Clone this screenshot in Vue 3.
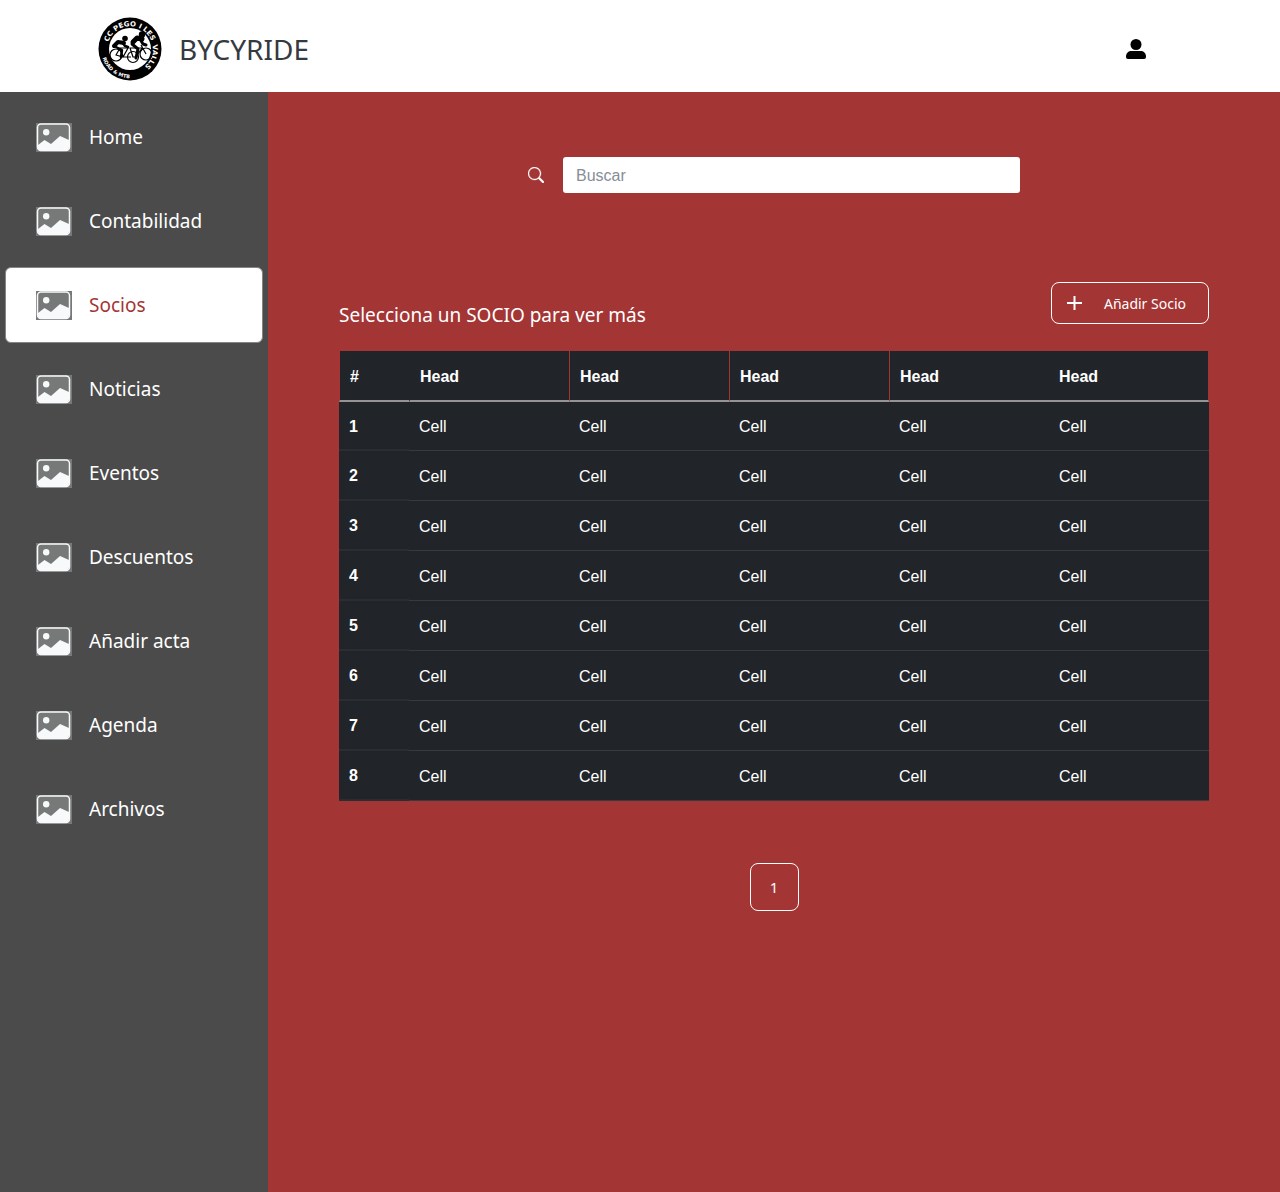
<script setup>
import { ref } from 'vue'

const sections = ['Home', 'Contabilidad', 'Socios', 'Noticias', 'Eventos', 'Descuentos', 'Añadir acta', 'Agenda', 'Archivos']
const active = ref('Socios')
const query = ref('')
const columns = 5
const rows = 8
</script>

<template>
  <div class="page">
    <header class="topbar">
      <a href="#" class="brand">
        <svg class="logo" viewBox="0 0 64 64" aria-hidden="true">
          <defs>
            <path id="arc-top" d="M10.300 25A22.800 22.800 0 1 1 46 50" />
            <path id="arc-bottom" d="M4.500 41A29 29 0 0 0 38 60.500" />
          </defs>
          <circle cx="32" cy="32" r="31.500" fill="#000" />
          <circle cx="32" cy="32" r="21" fill="#fff" />
          <text class="ring-text"><textPath href="#arc-top">CC PEGO I LES</textPath></text>
          <text class="ring-text"><textPath href="#arc-top" startOffset="60">VALLS</textPath></text>
          <text class="ring-small"><textPath href="#arc-bottom">ROAD &amp; MTB</textPath></text>
          <g fill="none" stroke="#000" stroke-width="1.200">
            <circle cx="18" cy="38" r="6" />
            <circle cx="35" cy="40" r="5.500" />
            <circle cx="48" cy="37" r="6" />
            <path d="M18 38l4-7h8l-5 9zM22 31l3 9h8M35 40l-3-9h12l-6 9zM43 28l5 9" />
          </g>
          <g fill="none" stroke="#000" stroke-linecap="round" stroke-linejoin="round">
            <path d="M16 29l4-4 6 1" stroke-width="4" />
            <path d="M24 25l3 4 3 1M18 30l6 3-1 7" stroke-width="2.500" />
            <path d="M35 25l4-4 5 1" stroke-width="5" />
            <path d="M42 22l3 5 3 1M34 27l6 5-2 9" stroke-width="3" />
          </g>
          <circle cx="27" cy="21.500" r="2.800" />
          <circle cx="44" cy="17.500" r="3.200" />
        </svg>
        <span class="brand-name">BYCYRIDE</span>
      </a>
      <button type="button" class="profile" aria-label="Perfil">
        <svg viewBox="0 0 20 20" width="20" height="20" aria-hidden="true">
          <circle cx="10" cy="5.500" r="5.500" />
          <path d="M0 17.500C0 14 2.500 12 5.500 12h9c3 0 5.500 2 5.500 5.500v.5q0 2-2 2H2q-2 0-2-2z" />
        </svg>
      </button>
    </header>

    <div class="body">
      <nav class="sidebar">
        <a
          v-for="name in sections"
          :key="name"
          href="#"
          class="item"
          :class="{ active: name === active }"
          @click.prevent="active = name"
        >
          <svg class="picture" viewBox="0 0 36 29" aria-hidden="true">
            <rect width="36" height="29" fill="#777878" />
            <rect x="1.500" y="1" width="32" height="26.500" rx="3.500" fill="none" stroke="#f8f9fa" stroke-width="1.500" />
            <circle cx="10.200" cy="9.300" r="3.200" fill="#f8f9fa" />
            <path d="M2 22l6.500-5 6.500 4L24 13l9 4v7q0 3.500-3 3.500H5q-3 0-3-3z" fill="#f8f9fa" />
          </svg>
          <span>{{ name }}</span>
        </a>
      </nav>

      <main class="content">
        <form class="search" role="search" @submit.prevent>
          <label for="search-box" aria-label="Buscar">
            <svg viewBox="0 0 16 16" width="16" height="16" aria-hidden="true">
              <path fill="#fff" stroke="#fff" stroke-width=".3" d="M11.742 10.344a6.500 6.500 0 1 0-1.397 1.398h-.001c.03.04.062.078.098.115l3.850 3.850a1 1 0 0 0 1.415-1.414l-3.850-3.850a1.007 1.007 0 0 0-.115-.1zM12 6.500a5.500 5.500 0 1 1-11 0 5.500 5.500 0 0 1 11 0z" />
            </svg>
          </label>
          <input id="search-box" v-model="query" type="text" placeholder="Buscar" />
        </form>

        <div class="heading">
          <h1>Selecciona un SOCIO para ver más</h1>
          <button type="button" class="outline add">
            <svg viewBox="0 0 15 15" width="15" height="15" aria-hidden="true">
              <path d="M7.500 0v14M0 7h15" stroke="#fff" stroke-width="2" />
            </svg>
            <span>Añadir Socio</span>
          </button>
        </div>

        <table>
          <thead>
            <tr>
              <th scope="col" class="index">#</th>
              <th v-for="c in columns" :key="c" scope="col">Head</th>
            </tr>
          </thead>
          <tbody>
            <tr v-for="r in rows" :key="r">
              <th scope="row">{{ r }}</th>
              <td v-for="c in columns" :key="c">Cell</td>
            </tr>
          </tbody>
        </table>

        <div class="pager">
          <button type="button" class="outline page-number">1</button>
        </div>
      </main>
    </div>
  </div>
</template>

<style>
body {
  margin: 0;
}
</style>

<style scoped>
.page {
  display: flex;
  flex-direction: column;
  min-height: 100vh;
  font-family: "Noto Sans", "Open Sans", sans-serif;
  color: #fff;
}

.page *,
.page {
  box-sizing: border-box;
}

.topbar {
  display: flex;
  align-items: center;
  justify-content: space-between;
  height: 92px;
  padding: 5px 134px 0 98px;
  background: #fff;
}

.brand {
  display: flex;
  align-items: center;
  gap: 17px;
  color: #343a40;
  text-decoration: none;
}

.logo {
  width: 64px;
  height: 64px;
}

.ring-text,
.ring-small {
  fill: #fff;
  font-family: "DejaVu Sans", sans-serif;
  font-size: 7px;
  font-weight: 700;
}

.ring-small {
  font-size: 5px;
}

.brand-name {
  font-size: 28px;
  line-height: 40px;
}

.profile {
  display: flex;
  padding: 0;
  border: 0;
  background: none;
}

.body {
  display: flex;
  flex: 1;
}

.sidebar {
  display: flex;
  flex: none;
  flex-direction: column;
  gap: 8px;
  width: 268px;
  padding: 7px 5px;
  background: #4b4b4b;
}

.item {
  display: flex;
  align-items: center;
  gap: 17px;
  height: 76px;
  padding: 0 30px;
  border: 1px solid transparent;
  border-radius: 6px;
  color: #fff;
  font-size: 19px;
  line-height: 28px;
  text-decoration: none;
}

.item.active {
  border-color: #858585;
  background: #fff;
  color: #a33535;
}

.picture {
  width: 36px;
  height: 29px;
}

.content {
  flex: 1;
  min-width: 0;
  padding: 65px 71px;
  background: #a33535;
}

.search {
  display: flex;
  align-items: center;
  justify-content: center;
  gap: 19px;
}

.search label {
  display: flex;
}

.search input {
  width: 457px;
  height: 36px;
  padding: 2px 13px 0;
  border: 0;
  border-radius: 3px;
  background: #fff;
  color: #212529;
  font: 16px "Liberation Sans", Arial, sans-serif;
}

.search input::placeholder {
  color: #868e96;
  opacity: 1;
}

.heading {
  display: flex;
  align-items: flex-end;
  justify-content: space-between;
  margin: 89px 0 27px;
}

h1 {
  margin: 0;
  font-size: 19px;
  font-weight: 400;
  line-height: 18px;
}

.outline {
  border: 1px solid #fff;
  border-radius: 8px;
  background: transparent;
  color: #fff;
  font-family: inherit;
  font-size: 14px;
}

.add {
  display: flex;
  align-items: center;
  gap: 22px;
  height: 42px;
  padding: 0 22px 0 15px;
}

table {
  width: 100%;
  border-collapse: separate;
  border-spacing: 0;
  table-layout: fixed;
  font: 16px "Liberation Sans", Arial, sans-serif;
}

th,
td {
  height: 50px;
  padding: 2px 10px 0;
  background: #212529;
  text-align: left;
}

.index {
  width: 70px;
}

thead th {
  height: 51px;
  border-bottom: 2px solid #949494;
  border-left: 1px solid #a33535;
}

thead th:nth-child(2) {
  border-left-color: #212529;
}

thead th:last-child {
  border-right: 1px solid #a33535;
  border-left: 0;
}

tbody tr:first-child > * {
  height: 49px;
}

tbody th {
  border-bottom: 2px solid #2a2e32;
}

td {
  border-bottom: 1px solid #373b3e;
}

.pager {
  display: flex;
  justify-content: center;
  margin-top: 62px;
}

.page-number {
  width: 49px;
  height: 48px;
  padding: 0;
  font-size: 15px;
}
</style>
